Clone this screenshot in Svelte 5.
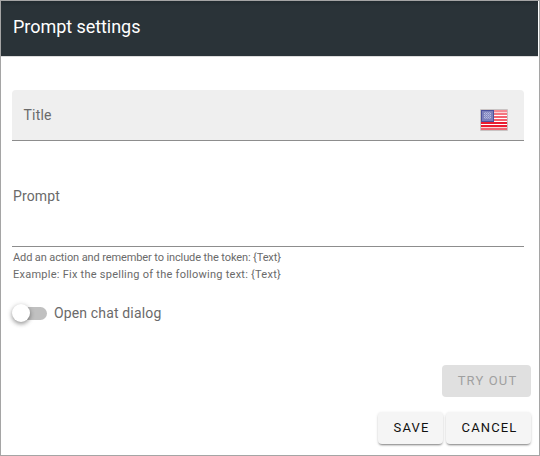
<script>
  let open = $state(false);
  const stripes = [
    { y: 1, color: '#f58c94' },
    { y: 4, color: '#f47680' },
    { y: 7, color: '#f4626e' },
    { y: 10, color: '#f2606c' },
    { y: 13, color: '#e91c30' },
    { y: 16, color: '#e91c30' },
    { y: 19, color: '#ee6672' },
  ];
</script>

<div class="dialog">
  <header>Prompt settings</header>
  <main>
    <div class="field">
      <span>Title</span>
      <svg class="flag" width="28" height="23" viewBox="0 0 28 23" aria-label="English (US)">
        <defs>
          <pattern id="stars" width="2" height="2" patternUnits="userSpaceOnUse">
            <rect width="2" height="2" fill="#8589c2" />
            <rect width="1" height="1" fill="#b9bce0" />
            <rect x="1" y="1" width="1" height="1" fill="#a2a6d2" />
          </pattern>
        </defs>
        <rect x="0" y="0" width="28" height="22" rx="1" fill="#c9c3c3" />
        <rect x="1" y="1" width="26" height="20" fill="#fbd5d8" />
        <rect x="1" y="12" width="26" height="1" fill="#fff" />
        {#each stripes as stripe}
          <rect x="1" y={stripe.y} width="26" height="2" fill={stripe.color} />
        {/each}
        <rect x="14" y="6" width="13" height="1" fill="#fff" />
        <rect x="14" y="9" width="13" height="1" fill="#fff" />
        <rect x="1" y="15" width="26" height="1" fill="#fff" />
        <rect x="1" y="1" width="13" height="12" fill="#4c519d" />
        <rect x="2" y="2" width="11" height="10" fill="#7b7fbb" />
        <rect x="4" y="3" width="7" height="7" fill="url(#stars)" />
      </svg>
    </div>
    <div class="area"><span>Prompt</span></div>
    <div class="help">
      <div class="first">Add an action and remember to include the token: {'{Text}'}</div>
      <div class="second">Example: Fix the spelling of the following text: {'{Text}'}</div>
    </div>
    <button class="toggle" role="switch" aria-checked={open} onclick={() => (open = !open)}>
      <span class="track"><span class="thumb" class:on={open}></span></span>
      <span class="label">Open chat dialog</span>
    </button>
  </main>
  <footer>
    <button class="btn try" disabled>TRY OUT</button>
    <div class="row">
      <button class="btn save">SAVE</button>
      <button class="btn cancel">CANCEL</button>
    </div>
  </footer>
</div>

<style>
  .dialog {
    box-sizing: border-box;
    width: 540px;
    height: 456px;
    border: 1px solid #a5a5a5;
    background: #fff;
    font-family: Roboto, sans-serif;
    color: #6a6a6a;
    display: flex;
    flex-direction: column;
  }
  header {
    box-sizing: border-box;
    height: 56px;
    margin-right: 1px;
    padding-left: 12px;
    background: linear-gradient(#222b30, #2a3338 5px);
    border-bottom: 1px solid #dcdcdc;
    color: #fff;
    font-size: 18px;
    line-height: 52px;
    letter-spacing: -0.05px;
  }
  main {
    padding: 33px 15px 0 11px;
    flex: 1;
  }
  .field {
    box-sizing: border-box;
    height: 51px;
    padding: 0 16px 0 11.5px;
    display: flex;
    align-items: center;
    justify-content: space-between;
    background: #efefef;
    border-bottom: 1px solid #8d8d8d;
    border-radius: 4px 4px 0 0;
    font-size: 14px;
    letter-spacing: 0.2px;
  }
  .flag {
    margin-top: 10px;
  }
  .area {
    box-sizing: border-box;
    height: 106px;
    padding: 47px 1px 0;
    border-bottom: 1px solid #8d8d8d;
    font-size: 14px;
    line-height: 16px;
    letter-spacing: 0.15px;
  }
  .help {
    padding: 2px 1px 0;
    font-size: 11px;
    line-height: 17px;
    white-space: nowrap;
  }
  .first { letter-spacing: -0.11px; }
  .second { letter-spacing: 0.25px; }
  button {
    font-family: inherit;
    border: 0;
    padding: 0;
    margin: 0;
  }
  .toggle {
    display: flex;
    align-items: center;
    margin-top: 20px;
    height: 20px;
    background: none;
    color: #6a6a6a;
  }
  .track {
    position: relative;
    width: 34px;
    height: 13px;
    margin-left: 1px;
    border-radius: 7px;
    background: #c0c0c0;
  }
  .thumb {
    position: absolute;
    left: -1px;
    top: -3px;
    width: 18px;
    height: 18px;
    border-radius: 50%;
    background: #fff;
    box-shadow: 0 2px 4px rgba(0, 0, 0, 0.35), 0 1px 6px rgba(0, 0, 0, 0.12);
  }
  .thumb.on { left: 17px; }
  .label {
    margin-left: 7px;
    font-size: 14px;
    letter-spacing: 0.15px;
  }
  footer {
    display: flex;
    flex-direction: column;
    align-items: flex-end;
    gap: 15px;
    padding: 0 8px 11px 0;
  }
  .row {
    display: flex;
    gap: 3px;
  }
  .btn {
    height: 32px;
    padding: 0 0 1px 2px;
    border-radius: 4px;
    background: #f5f5f5;
    color: #111;
    font-size: 13px;
    font-weight: 400;
    letter-spacing: 1.15px;
    box-shadow: 0 2px 2px -1px rgba(0, 0, 0, 0.4), 0 1px 3px rgba(0, 0, 0, 0.16);
  }
  .try {
    width: 89px;
    background: #e0e0e0;
    color: #a0a0a0;
    box-shadow: none;
  }
  .save { width: 65px; }
  .cancel { width: 85px; }
</style>
